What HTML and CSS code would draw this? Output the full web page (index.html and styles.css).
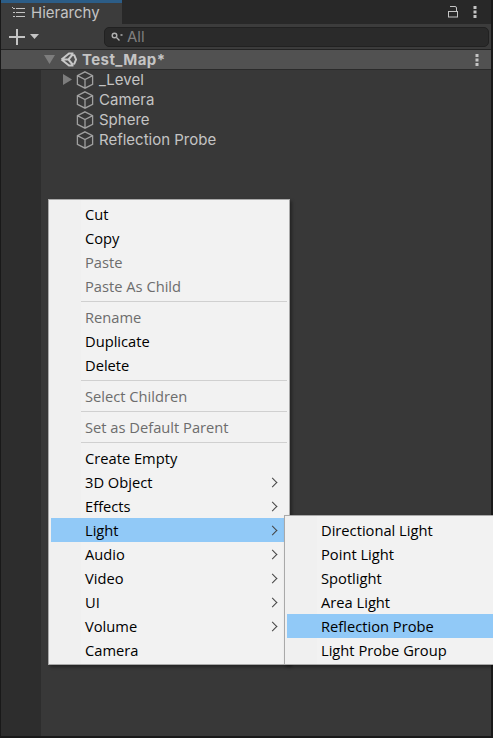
FILE: index.html
```html
<!DOCTYPE html>
<html lang="en">
<head>
    <meta charset="UTF-8">
    <title>Hierarchy</title>
    <link rel="stylesheet" href="styles.css">
</head>
<body>
    <div class="window">
        <div class="tab-bar">
            <div class="tab">
                <svg class="tab-icon" width="14" height="11" viewBox="0 0 14 11" fill="#c4c4c4">
                    <rect x="0" y="0" width="1" height="1"/><rect x="1" y="1" width="2" height="1"/>
                    <rect x="4" y="1" width="9" height="1"/>
                    <rect x="1" y="5" width="2" height="1"/><rect x="4" y="5" width="9" height="1"/>
                    <rect x="1" y="9" width="2" height="1"/><rect x="4" y="9" width="9" height="1"/>
                </svg>
                <span>Hierarchy</span>
            </div>
            <div class="tab-actions">
                <svg width="11" height="13" viewBox="0 0 11 13" fill="none" stroke="#c4c4c4" stroke-width="1">
                    <rect x="0.500" y="6.500" width="9" height="5.500"/>
                    <path d="M2 1.500h5a1.500 1.500 0 0 1 1.500 1.500v3.500"/>
                </svg>
                <svg width="4" height="14" viewBox="0 0 4 14" fill="#c4c4c4"><rect x="0.500" y="1" width="3" height="3"/><rect x="0.500" y="5.500" width="3" height="3"/><rect x="0.500" y="10" width="3" height="3"/></svg>
            </div>
        </div>
        <div class="toolbar">
            <div class="add-button">
                <svg width="16" height="16" viewBox="0 0 16 16" fill="#c4c4c4"><rect x="7" y="0" width="2" height="16"/><rect x="0" y="7" width="16" height="2"/></svg>
                <svg width="9" height="5" viewBox="0 0 9 5" fill="#c4c4c4"><path d="M0 0h9L4.500 5z"/></svg>
            </div>
            <div class="search">
                <svg width="12" height="10" viewBox="0 0 12 10" fill="none" stroke="#b0b0b0" stroke-width="1.400">
                    <circle cx="3.500" cy="3.500" r="2.300"/>
                    <path d="M5.500 5.500l3 3M9.500 3h2"/>
                </svg>
                <span>All</span>
            </div>
        </div>
        <div class="panel">
            <div class="scene-row">
                <svg class="fold" width="11" height="9" viewBox="0 0 11 9" fill="#7d7d7d"><path d="M0 0h11L5.500 9z"/></svg>
                <svg class="unity-logo" width="17" height="17" viewBox="0 0 17 17" fill="none" stroke="#c8c8c8" stroke-width="2">
                    <path d="M1.500 8.500L9 2.500h4.500M1.500 8.500L9 14.500h4.500M14 3.500l2 5-2 5M2 8.500h6.500L13 3M8.500 8.500L13 14"/>
                </svg>
                <span class="scene-name">Test_Map*</span>
                <svg class="scene-more" width="4" height="14" viewBox="0 0 4 14" fill="#c4c4c4"><rect x="0.500" y="1" width="3" height="3"/><rect x="0.500" y="5.500" width="3" height="3"/><rect x="0.500" y="10" width="3" height="3"/></svg>
            </div>
            <ul class="tree">
                <li class="tree-row">
                    <svg class="expand" width="9" height="11" viewBox="0 0 9 11" fill="#7d7d7d"><path d="M0 0v11L9 5.500z"/></svg>
                    <svg class="cube" width="18" height="18" viewBox="0 0 18 18" fill="none" stroke="#a0a0a0" stroke-width="1.300"><path d="M9 .8l7.600 3.900v8.600L9 17.200l-7.600-3.900V4.700zM1.400 4.700L9 8.600l7.600-3.900M9 8.600v8.600"/></svg>
                    <span>_Level</span>
                </li>
                <li class="tree-row">
                    <svg class="cube" width="18" height="18" viewBox="0 0 18 18" fill="none" stroke="#a0a0a0" stroke-width="1.300"><path d="M9 .8l7.600 3.900v8.600L9 17.200l-7.600-3.900V4.700zM1.400 4.700L9 8.600l7.600-3.900M9 8.600v8.600"/></svg>
                    <span>Camera</span>
                </li>
                <li class="tree-row">
                    <svg class="cube" width="18" height="18" viewBox="0 0 18 18" fill="none" stroke="#a0a0a0" stroke-width="1.300"><path d="M9 .8l7.600 3.900v8.600L9 17.200l-7.600-3.900V4.700zM1.400 4.700L9 8.600l7.600-3.900M9 8.600v8.600"/></svg>
                    <span>Sphere</span>
                </li>
                <li class="tree-row">
                    <svg class="cube" width="18" height="18" viewBox="0 0 18 18" fill="none" stroke="#a0a0a0" stroke-width="1.300"><path d="M9 .8l7.600 3.900v8.600L9 17.200l-7.600-3.900V4.700zM1.400 4.700L9 8.600l7.600-3.900M9 8.600v8.600"/></svg>
                    <span>Reflection Probe</span>
                </li>
            </ul>
        </div>
    </div>

    <div class="menu context-menu">
        <div class="menu-item">Cut</div>
        <div class="menu-item">Copy</div>
        <div class="menu-item disabled">Paste</div>
        <div class="menu-item disabled">Paste As Child</div>
        <div class="menu-sep"></div>
        <div class="menu-item disabled">Rename</div>
        <div class="menu-item">Duplicate</div>
        <div class="menu-item">Delete</div>
        <div class="menu-sep"></div>
        <div class="menu-item disabled">Select Children</div>
        <div class="menu-sep"></div>
        <div class="menu-item disabled">Set as Default Parent</div>
        <div class="menu-sep"></div>
        <div class="menu-item">Create Empty</div>
        <div class="menu-item sub">3D Object</div>
        <div class="menu-item sub">Effects</div>
        <div class="menu-item sub active">Light</div>
        <div class="menu-item sub">Audio</div>
        <div class="menu-item sub">Video</div>
        <div class="menu-item sub">UI</div>
        <div class="menu-item sub">Volume</div>
        <div class="menu-item">Camera</div>
    </div>

    <div class="menu sub-menu">
        <div class="menu-item">Directional Light</div>
        <div class="menu-item">Point Light</div>
        <div class="menu-item">Spotlight</div>
        <div class="menu-item">Area Light</div>
        <div class="menu-item active">Reflection Probe</div>
        <div class="menu-item">Light Probe Group</div>
    </div>
</body>
</html>
```

FILE: styles.css
```css
* {
    margin: 0;
    padding: 0;
    box-sizing: border-box;
}

body {
    width: 493px;
    height: 738px;
    overflow: hidden;
    position: relative;
    background: #191919;
    font-family: 'Inter', sans-serif;
}

.window {
    height: 736px;
    margin: 0 2px 0 1px;
    display: flex;
    flex-direction: column;
    background: #383838;
}

.tab-bar {
    height: 24px;
    flex-shrink: 0;
    display: flex;
    justify-content: space-between;
    background: #282828;
}

.tab {
    width: 121px;
    display: flex;
    align-items: center;
    gap: 5px;
    padding-left: 11px;
    padding-bottom: 2px;
    border-top: 3px solid #2c5d87;
    background: #3c3c3c;
    color: #c4c4c4;
    font-size: 15px;
}

.tab-actions {
    display: flex;
    align-items: center;
    gap: 14px;
    padding-right: 14px;
    padding-bottom: 1px;
}

.toolbar {
    height: 26px;
    flex-shrink: 0;
    display: flex;
    align-items: center;
    padding-left: 8px;
    background: #3c3c3c;
    border-bottom: 1px solid #232323;
}

.add-button {
    width: 95px;
    display: flex;
    align-items: center;
    gap: 5px;
}

.search {
    width: 385px;
    height: 20px;
    display: flex;
    align-items: center;
    gap: 4px;
    padding-left: 6px;
    background: #2a2a2a;
    border: 1px solid #212121;
    border-radius: 5px;
    color: #7f7f7f;
    font-size: 15px;
}

.panel {
    flex: 1;
    background: #383838;
    border-left: 40px solid #2d2d2d;
}

.scene-row {
    height: 20px;
    margin-left: -40px;
    display: flex;
    align-items: center;
    padding-left: 43px;
    background: #515151;
    border-bottom: 1px solid #2a2a2a;
}

.unity-logo {
    margin-left: 5px;
}

.scene-name {
    margin-left: 5px;
    color: #c4c4c4;
    font-size: 15px;
    font-weight: 700;
    letter-spacing: 0.4px;
}

.scene-more {
    margin-left: auto;
    margin-right: 12px;
}

.tree {
    list-style: none;
}

.tree-row {
    height: 20px;
    display: flex;
    align-items: center;
    padding-left: 35px;
    position: relative;
    color: #c4c4c4;
    font-size: 15px;
}

.tree-row span {
    margin-top: -2px;
}

.cube {
    margin-right: 5px;
}

.expand {
    position: absolute;
    left: 22px;
    top: 4px;
}

/* popup menus sit on top of the panel */
.menu {
    position: absolute;
    padding: 2px;
    background: linear-gradient(to right, #f0f0f0 32px, #f2f2f2 32px);
    border: 1px solid #a9a9a9;
    box-shadow: 2px 2px 3px rgba(0, 0, 0, 0.35);
    font-family: 'Open Sans', sans-serif;
    font-size: 14.7px;
}

.context-menu {
    left: 48px;
    top: 199px;
    width: 242px;
    height: 466px;
}

.sub-menu {
    left: 284px;
    top: 515px;
    width: 220px;
    height: 150px;
}

.menu-item {
    height: 24px;
    line-height: 24px;
    padding-left: 34px;
    color: #000;
    position: relative;
}

.menu-item.disabled {
    color: #6d6d6d;
}

.menu-item.active {
    background: #91c9f7;
}

.menu-item.sub::after {
    content: "";
    position: absolute;
    left: 218px;
    top: 9px;
    width: 6px;
    height: 6px;
    border-top: 1px solid #444;
    border-right: 1px solid #444;
    transform: rotate(45deg);
}

.context-menu .menu-item.active {
    margin-right: -2px;
}

.menu-sep {
    height: 1px;
    margin: 3px 0 3px 30px;
    background: #d0d0d0;
}
```
